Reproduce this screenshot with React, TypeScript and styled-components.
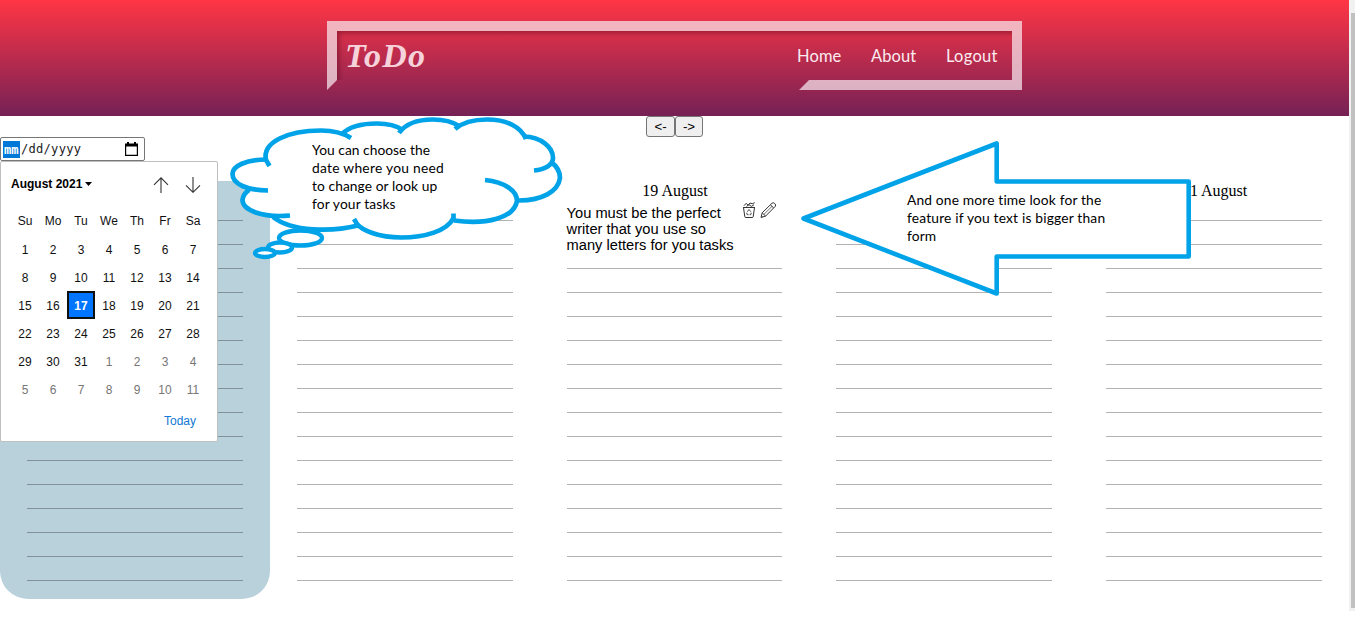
import React from "react";
import styled, { createGlobalStyle } from "styled-components";

const GlobalStyle = createGlobalStyle`
  html, body { margin: 0; background: #fff; overflow: hidden; }
  body { font-family: "Liberation Serif", serif; font-size: 16px; color: #000; }
  * { box-sizing: border-box; }
`;

const Shell = styled.div`
  position: relative;
  display: flex;
  align-items: flex-start;
  width: 1355px;
  height: 637px;
  overflow: hidden;
`;

const Page = styled.div`
  position: relative;
  width: 1349px;
  height: 637px;
`;

const ScrollTrack = styled.div`
  display: flex;
  flex-direction: column;
  width: 6px;
  height: 611px;
  padding: 13px 0 3px 2px;
  background: #f1f1f1;
`;

const ScrollThumb = styled.div`
  flex: 1;
  background: #c1c1c1;
`;

const Header = styled.header`
  display: flex;
  height: 116px;
  padding: 21px 0 0 327px;
  background: linear-gradient(#ff3545, #752155);
`;

const NavFrame = styled.nav`
  display: flex;
  align-items: center;
  justify-content: space-between;
  width: 695px;
  height: 69px;
  padding: 0 15px 0 8px;
  border: 10px solid rgba(250, 238, 244, 0.7);
  background-clip: padding-box;
  box-shadow: inset 5px 5px 5px -3px rgba(60, 0, 20, 0.42);
  clip-path: polygon(0 0, 100% 0, 100% 100%, 472px 100%, 482px 59px, 10px 59px, 0 100%);
`;

const Logo = styled.span`
  font: italic bold 34px/46px "Liberation Serif", serif;
  letter-spacing: 1.3px;
  color: #f6d3da;
`;

const Links = styled.div`
  display: flex;
  gap: 30px;
`;

const NavLink = styled.a<{ $width: number; $spacing: number }>`
  width: ${(p) => p.$width}px;
  font: 16.5px/24px Lato, sans-serif;
  letter-spacing: ${(p) => p.$spacing}px;
  white-space: nowrap;
  color: #faebf0;
`;

const Pager = styled.div`
  display: flex;
  justify-content: center;
  height: 21px;
`;

const PagerButton = styled.button<{ $width: number }>`
  width: ${(p) => p.$width}px;
  height: 21px;
  padding: 0;
  border: 1px solid #767676;
  border-radius: 3px;
  background: #efefef;
  font: 13.33px/15px "Liberation Sans", sans-serif;
  color: #000;
`;

const DateField = styled.div`
  display: flex;
  align-items: center;
  width: 145px;
  height: 24px;
  padding: 0 6px 0 2px;
  border: 1px solid #767676;
  border-radius: 2px;
  font: 12.1px/19px "DejaVu Sans Mono", monospace;
  color: #222;
`;

const ActivePart = styled.span`
  width: 17px;
  height: 17px;
  padding-left: 1px;
  background: #0078d7;
  color: #fff;
  font-weight: bold;
`;

const DateParts = styled.span`
  flex: 1;
  padding-left: 1px;
  letter-spacing: 0.25px;
  white-space: pre;
`;

const Popup = styled.section`
  position: absolute;
  z-index: 2;
  left: 0;
  top: 161px;
  width: 218px;
  height: 281px;
  padding: 0 10px;
  border: 1px solid #bfbfbf;
  border-radius: 2px;
  background: #fff;
  font: 12px/28px "Liberation Sans", sans-serif;
`;

const MonthBar = styled.div`
  display: flex;
  align-items: center;
  height: 45px;
  gap: 16px;
  padding-right: 6px;
`;

const MonthName = styled.div`
  display: flex;
  align-items: center;
  flex: 1;
  gap: 3px;
  padding-bottom: 2px;
  font-weight: bold;
  white-space: nowrap;
`;

const DayGrid = styled.div`
  display: grid;
  grid-template-columns: repeat(7, 28px);
  grid-template-rows: 29px repeat(6, 28px);
  justify-content: center;
  text-align: center;
`;

const DayCell = styled.span<{ $muted?: boolean; $selected?: boolean }>`
  height: 28px;
  margin-top: ${(p) => (p.$selected ? -1 : 0)}px;
  line-height: ${(p) => (p.$selected ? 26 : 28)}px;
  color: ${(p) => (p.$selected ? "#fff" : p.$muted ? "#767676" : "#101010")};
  font-weight: ${(p) => (p.$selected ? "bold" : "normal")};
  border: ${(p) => (p.$selected ? "2px solid #101010" : "0")};
  background: ${(p) => (p.$selected ? "#0075ff" : "transparent")};
`;

const TodayLink = styled.div`
  padding: 3px 11px 0 0;
  text-align: right;
  color: #1277d3;
`;

const Week = styled.main`
  display: grid;
  grid-template-columns: repeat(5, 1fr);
  height: 418px;
  margin-top: 20px;
`;

const Day = styled.section<{ $today?: boolean }>`
  padding: 0 27px;
  border-radius: 28px;
  background: ${(p) => (p.$today ? "#b8d1da" : "transparent")};
`;

const DayTitle = styled.h2`
  height: 16px;
  margin: 0;
  padding-left: 1px;
  font: 16px/20px "Liberation Serif", serif;
  text-align: center;
`;

const Line = styled.div<{ $rows?: number }>`
  display: flex;
  justify-content: space-between;
  height: ${(p) => (p.$rows ?? 1) * 24}px;
  padding: 5px 5px 0 0;
  border-bottom: 1px solid rgba(0, 0, 0, 0.3);
`;

const TaskText = styled.p`
  margin: 3px 0 0;
  font: 14.67px/16px "Liberation Sans", sans-serif;
  white-space: nowrap;
`;

const TaskIcons = styled.div`
  display: flex;
  gap: 4px;
  margin-left: -20px;
`;

const CalloutArt = styled.svg`
  position: absolute;
  z-index: 3;
  left: 0;
  top: 0;
  pointer-events: none;
`;

const CalloutText = styled.div<{ $x: number; $y: number }>`
  position: absolute;
  z-index: 4;
  left: ${(p) => p.$x}px;
  top: ${(p) => p.$y}px;
  font: 13.8px/18px Lato, sans-serif;
`;

const CalloutLine = styled.div<{ $spacing: number }>`
  letter-spacing: ${(p) => p.$spacing}px;
  white-space: nowrap;
`;

const weekdays = ["Su", "Mo", "Tu", "We", "Th", "Fr", "Sa"];
const days = Array.from({ length: 42 }, (_, i) => ({
  label: i < 31 ? i + 1 : i - 30,
  muted: i >= 31,
}));

const MonthArrow = ({ down }: { down?: boolean }) => (
  <svg width="16" height="16" viewBox="0 0 16 16" fill="none" stroke="#333" strokeWidth="1.1">
    {down ? <path d="M8 0V15.3M1 8.3L8 15.3L15 8.3" /> : <path d="M8 16V0.8M1 7.8L8 0.8L15 7.8" />}
  </svg>
);

const CalendarIcon = () => (
  <svg width="13" height="15" viewBox="0 0 13 15">
    <path d="M2 0H4V1.5H9V0H11V1.5H13V14H0V1.5H2ZM1.2 4.500V12.800H11.800V4.500Z" fill="#000" fillRule="evenodd" />
  </svg>
);

const TrashIcon = () => (
  <svg width="14" height="17" viewBox="0 0 14 17" fill="none" stroke="#333" strokeWidth="1">
    <path d="M1 5.5H13M1.5 5.5L2.8 14.7Q2.900 15.500 4 15.500H10Q11.100 15.500 11.200 14.700L12.500 5.500M2 3.700L4.200 1.300L6.200 3.300L8 1L10.200 1.800L12.700 .7M4.500 4.500L6.800 2.600L9.400 4.400L12 2.800" />
    <path strokeWidth=".9" d="M5.300 9.700L7 7.500L8.800 9.700M4.700 10.700L5.200 12.700H6.500M9.200 10.700L8.800 12.700H7.600" />
  </svg>
);

const PencilIcon = () => (
  <svg width="17" height="17" viewBox="0 0 17 17" fill="none" stroke="#333" strokeWidth="1">
    <path d="M1 15.500L2.200 10.800L12 1.200Q13.300 .2 14.700 1.500Q16.300 3 15.300 4.300L5.600 14.100ZM2.200 10.800L5.600 14.100M10.400 2.900L13.700 5.900" />
    <path strokeWidth=".7" d="M3.900 12.400L12 4.400M1.600 13.800L2.700 14.900" />
  </svg>
);

const DAY_TITLES = ["", "", "19 August", "", "21 August"];

function DayColumn({ title, index }: { title: string; index: number }) {
  const hasTask = index === 2;
  return (
    <Day $today={index === 0}>
      <DayTitle>{title}</DayTitle>
      {hasTask && (
        <Line $rows={3}>
          <TaskText>
            You must be the perfect
            <br />
            writer that you use so
            <br />
            many letters for you tasks
          </TaskText>
          <TaskIcons>
            <TrashIcon />
            <PencilIcon />
          </TaskIcons>
        </Line>
      )}
      {Array.from({ length: hasTask ? 13 : 16 }, (_, i) => (
        <Line key={i} />
      ))}
    </Day>
  );
}

export default function App() {
  return (
    <Shell>
      <GlobalStyle />
      <Page>
        <Header>
          <NavFrame>
            <Logo>ToDo</Logo>
            <Links>
              <NavLink $width={44} $spacing={0.1}>Home</NavLink>
              <NavLink $width={45} $spacing={0.1}>About</NavLink>
              <NavLink $width={51} $spacing={0.25}>Logout</NavLink>
            </Links>
          </NavFrame>
        </Header>
        <Pager>
          <PagerButton $width={29}>&lt;-</PagerButton>
          <PagerButton $width={28}>-&gt;</PagerButton>
        </Pager>
        <DateField>
          <ActivePart>mm</ActivePart>
          <DateParts>/dd/yyyy</DateParts>
          <CalendarIcon />
        </DateField>
        <Week>
          {DAY_TITLES.map((title, i) => (
            <DayColumn key={i} title={title} index={i} />
          ))}
        </Week>

        <Popup>
          <MonthBar>
            <MonthName>
              August 2021
              <svg width="7" height="4" viewBox="0 0 7 4"><path d="M0 0H7L3.5 4Z" /></svg>
            </MonthName>
            <MonthArrow />
            <MonthArrow down />
          </MonthBar>
          <DayGrid>
            {weekdays.map((d) => (
              <DayCell key={d}>{d}</DayCell>
            ))}
            {days.map((d, i) => (
              <DayCell key={i} $muted={d.muted} $selected={i === 16}>
                {d.label}
              </DayCell>
            ))}
          </DayGrid>
          <TodayLink>Today</TodayLink>
        </Popup>

        <CalloutArt width="1349" height="310" viewBox="0 0 1349 310">
          <path
            fill="#fff"
            d="M265 159C264 142 285 130 321 130L343 133C350 126 363 123.5 377 123.5L401 130C408 123 418 119 433 119L457 127C464 122 475 119 487 119C506 119 520 126 526 137C540 137 553 146 553 158L551 162C560 170 561 176 561 180C558 192 542 200 519 200.5C515 216 490 225 454 221C446 230 425 238 401 238C378 238 361 230 356 225C330 232 290 231 273 217C252 216 242 209 242 200Q242 194 249 189C238 186 232 181 232 174C232 166 245 159 265 159Z"
          />
          <g fill="none" stroke="#00a2e8" strokeWidth="4.7">
            <path d="M269.5 166L266 160C262 142 288 130.500 321 130.500C333 130.500 343 133 351 138" />
            <path d="M342 134C350 126 363 123.500 377 123.500C388 123.500 397 126 403 130M399 133C406 123 419 119.500 433 119.500C444 119.500 453 122 459 126M455 129C463 122 475 119.500 487 119.500C507 119.500 521 127 526 139" />
            <path d="M524 136.500C541 137 553 147 553 158C553 165 545 169.500 534 170.500M551 162C558 167 560 172 560 178C558 192 542 200 519 200.500" />
            <path d="M485 180C505 182 517 191 517 201C514 218 487 225 454 220.500M453.500 213.500V218C447 231 425 237.500 401 237.500C378 237.500 362 230 357 224L354 219" />
            <path d="M358 225.500C332 232 292 232 273 217M290 215.500C262 218 242.500 210 242.500 200Q243 194 249 190M268 190.500C247 190.500 232.500 184 232.500 174C232.500 166 246 159.500 267 159.500" />
          </g>
          <g fill="#fff" stroke="#00a2e8" strokeWidth="4.4">
            <ellipse cx="300.500" cy="238" rx="21.500" ry="7.500" />
            <ellipse cx="280" cy="247.500" rx="12" ry="5" />
            <ellipse cx="265" cy="253" rx="10" ry="4" />
          </g>
          <path
            fill="#fff"
            stroke="#00a2e8"
            strokeWidth="4.6"
            strokeLinejoin="round"
            d="M803.500 218.500L996.700 143.500V181.500H1188.700V256.500H996.700V293.500Z"
          />
        </CalloutArt>
        <CalloutText $x={312} $y={141}>
          <CalloutLine $spacing={0.03}>You can choose the</CalloutLine>
          <CalloutLine $spacing={0.27}>date where you need</CalloutLine>
          <CalloutLine $spacing={0.07}>to change or look up</CalloutLine>
          <CalloutLine $spacing={0.13}>for your tasks</CalloutLine>
        </CalloutText>
        <CalloutText $x={907} $y={191}>
          <CalloutLine $spacing={0.15}>And one more time look for the</CalloutLine>
          <CalloutLine $spacing={0.18}>feature if you text is bigger than</CalloutLine>
          <CalloutLine $spacing={0.13}>form</CalloutLine>
        </CalloutText>
      </Page>
      <ScrollTrack>
        <ScrollThumb />
      </ScrollTrack>
    </Shell>
  );
}
